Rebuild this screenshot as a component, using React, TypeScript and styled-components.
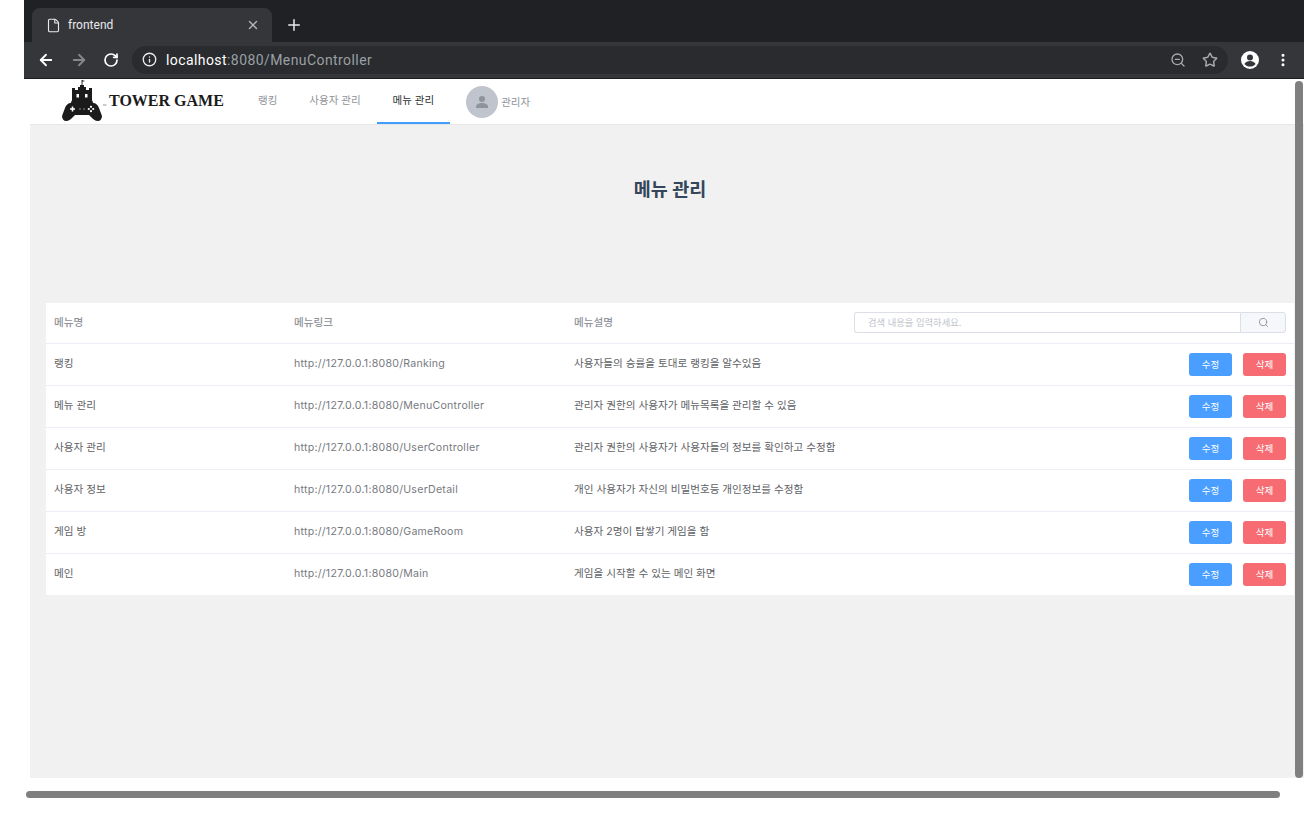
import React from 'react';
import styled, { createGlobalStyle } from 'styled-components';
import { ArrowLeft, ArrowRight, File, Info, MoreVertical, Plus, RotateCw, Search, Star, X, ZoomOut } from 'lucide-react';

const GlobalStyle = createGlobalStyle`
  html, body {
    margin: 0;
    padding: 0;
    background: #fff;
    overflow: hidden;
  }
  * { box-sizing: border-box; }
`;

const KR = `Inter, "Noto Sans CJK KR", sans-serif`;

const Page = styled.div`
  position: relative;
  width: 1304px;
  height: 828px;
  padding-left: 24px;
  overflow: hidden;
  font-family: ${KR};
`;

const TabStrip = styled.div`
  height: 42px;
  background: #202124;
  padding: 8px 0 0 8px;
  display: flex;
  align-items: flex-end;
`;

const Tab = styled.div`
  width: 240px;
  height: 34px;
  background: #35363a;
  border-radius: 8px 8px 0 0;
  padding: 0 12px 0 14px;
  display: flex;
  align-items: center;
  color: #e8eaed;
  font: 12px Roboto, sans-serif;
`;

const TabTitle = styled.span`
  flex: 1;
  margin-left: 7px;
`;

const NewTab = styled.div`
  height: 34px;
  margin-left: 13px;
  display: flex;
  align-items: center;
  color: #e8eaed;
`;

const Toolbar = styled.div`
  height: 37px;
  background: #35363a;
  border-bottom: 1px solid #1b1c1e;
  padding: 0 0 1px 13px;
  display: flex;
  align-items: center;
`;

const NavIcons = styled.div`
  width: 95px;
  display: flex;
  align-items: center;
  gap: 15px;
  color: #fff;
`;

const DimIcon = styled.span`
  display: flex;
  color: #85878a;
`;

const Omnibox = styled.div`
  width: 1096px;
  height: 28px;
  background: #292b2e;
  border-radius: 14px;
  padding: 0 10px;
  display: flex;
  align-items: center;
  color: #e8eaed;
  font: 14px Roboto, sans-serif;
  letter-spacing: 0.42px;
`;

const Address = styled.span`
  flex: 1;
  margin-left: 9px;
  color: #fff;
`;

const AddressRest = styled.span`
  color: #9aa0a6;
`;

const OmniIcons = styled.div`
  display: flex;
  align-items: center;
  gap: 16px;
  color: #a7a9ac;
`;

const ProfileIcons = styled.div`
  margin-left: 13px;
  display: flex;
  align-items: center;
  gap: 16px;
  color: #fff;
`;

const Header = styled.header`
  height: 45px;
  background: #fff;
  padding-left: 38px;
  display: flex;
`;

const Brand = styled.div`
  width: 180px;
  display: flex;
  align-items: flex-start;
`;

const BrandName = styled.span`
  margin: 13px 0 0 1px;
  font: bold 16px "Liberation Serif", serif;
  color: #1b1b1b;
  white-space: nowrap;
`;

const NavItem = styled.div<{ $active?: boolean }>`
  height: 45px;
  padding: 0 16px 2px;
  display: flex;
  align-items: center;
  font-size: 10.5px;
  white-space: nowrap;
  color: ${(p) => (p.$active ? '#303133' : '#909399')};
  border-bottom: 2px solid ${(p) => (p.$active ? '#409eff' : 'transparent')};
`;

const UserBox = styled.div`
  height: 45px;
  margin-left: 16px;
  display: flex;
  align-items: center;
  gap: 3px;
  font-size: 10.5px;
  color: #909399;
`;

const Avatar = styled.div`
  width: 32px;
  height: 32px;
  border-radius: 50%;
  background: #c0c4cc;
  display: flex;
  align-items: center;
  justify-content: center;
`;

const Content = styled.main`
  height: 654px;
  margin-left: 6px;
  background: #f1f1f1;
  border-top: 1px solid #e6e6e6;
  padding-left: 16px;
`;

const Title = styled.h2`
  margin: 0;
  width: 1248px;
  height: 178px;
  padding-top: 52px;
  text-align: center;
  font-size: 18.5px;
  line-height: 24px;
  font-weight: 700;
  color: #34465a;
`;

const Table = styled.section`
  width: 1248px;
  background: #fff;
`;

const Row = styled.div<{ $head?: boolean }>`
  height: ${(p) => (p.$head ? '41px' : '42px')};
  padding: 0 8px 4px;
  display: grid;
  grid-template-columns: 240px 280px 280px 1fr;
  align-items: center;
  font-size: 10.6px;
  font-weight: ${(p) => (p.$head ? 500 : 400)};
  color: ${(p) => (p.$head ? '#909399' : '#606266')};
  border-bottom: 1px solid #ebeef5;
  &:last-child {
    height: 41px;
    border-bottom: none;
  }
`;

const LinkCell = styled.span`
  margin-top: 2px;
  letter-spacing: 0.25px;
  color: #777a80;
`;

const SearchBox = styled.div`
  display: flex;
  height: 21px;
  margin-top: 3px;
`;

const SearchInput = styled.input`
  flex: 1;
  min-width: 0;
  border: 1px solid #dcdfe6;
  border-right: none;
  border-radius: 3px 0 0 3px;
  padding: 0 13px;
  font: 9.3px ${KR};
  outline: none;
  &::placeholder { color: #c0c4cc; }
`;

const SearchButton = styled.div`
  width: 46px;
  background: #f5f7fa;
  border: 1px solid #dcdfe6;
  border-radius: 0 3px 3px 0;
  display: flex;
  align-items: center;
  justify-content: center;
  color: #909399;
`;

const Actions = styled.div`
  display: flex;
  justify-content: flex-end;
  gap: 11px;
  margin-top: 3px;
`;

const ActionButton = styled.button<{ $danger?: boolean }>`
  width: 43px;
  height: 23px;
  padding: 0;
  border: none;
  border-radius: 3px;
  font: 9.5px ${KR};
  color: #fff;
  background: ${(p) => (p.$danger ? '#f66c72' : '#4a9eff')};
`;

const VerticalBar = styled.div`
  position: absolute;
  left: 1295px;
  top: 81px;
  width: 8px;
  height: 697px;
  border-radius: 4px;
  background: #7f7f7f;
`;

const HorizontalBar = styled.div`
  position: absolute;
  left: 26px;
  top: 791px;
  width: 1254px;
  height: 7px;
  border-radius: 4px;
  background: #7f7f7f;
`;

const menus = [
  { name: '랭킹', link: 'http://127.0.0.1:8080/Ranking', desc: '사용자들의 승률을 토대로 랭킹을 알수있음' },
  { name: '메뉴 관리', link: 'http://127.0.0.1:8080/MenuController', desc: '관리자 권한의 사용자가 메뉴목록을 관리할 수 있음' },
  { name: '사용자 관리', link: 'http://127.0.0.1:8080/UserController', desc: '관리자 권한의 사용자가 사용자들의 정보를 확인하고 수정함' },
  { name: '사용자 정보', link: 'http://127.0.0.1:8080/UserDetail', desc: '개인 사용자가 자신의 비밀번호등 개인정보를 수정함' },
  { name: '게임 방', link: 'http://127.0.0.1:8080/GameRoom', desc: '사용자 2명이 탑쌓기 게임을 함' },
  { name: '메인', link: 'http://127.0.0.1:8080/Main', desc: '게임을 시작할 수 있는 메인 화면' },
];

// castle on top of a game pad, plus the small dash that sits next to it
const Logo = () => (
  <svg width="46" height="44" viewBox="0 0 46 44" style={{ flex: 'none', marginTop: 1 }}>
    <path d="M20 0v6" stroke="#333" strokeWidth="1" />
    <path d="M20 0l3 1-3 1z" fill="#333" />
    <path
      d="M10 8h3v2h3V7h2V5h4v2h2v3h3V8h3v12l2 5H8l2-5z"
      fill="#1b1b1b"
    />
    <path
      d="M9 23h22c3 0 5 2 6 5l3 8c0 3-2 5-4 5-3 0-5-2-7-4l-2-2H13l-2 2c-2 2-4 4-7 4-2 0-4-2-4-5l3-8c1-3 3-5 6-5z"
      fill="#1b1b1b"
    />
    <rect x="14.500" y="14" width="2.500" height="3.500" fill="#fff" />
    <rect x="23" y="14" width="2.500" height="3.500" fill="#fff" />
    <path d="M10.500 26.500v5M8 29h5" stroke="#fff" strokeWidth="1.600" />
    <circle cx="29" cy="26.800" r="1.100" fill="#fff" />
    <circle cx="29" cy="31.200" r="1.100" fill="#fff" />
    <circle cx="26.800" cy="29" r="1.100" fill="#fff" />
    <circle cx="31.200" cy="29" r="1.100" fill="#fff" />
    <path d="M17 29h2M21 29h2" stroke="#888" strokeWidth="1" />
    <path d="M41 25h3.500" stroke="#999" strokeWidth="1" />
  </svg>
);

const AccountIcon = () => (
  <svg width="18" height="18" viewBox="0 0 18 18">
    <circle cx="9" cy="9" r="9" fill="#fff" />
    <circle cx="9" cy="6.600" r="3" fill="#35363a" />
    <path d="M3.400 13c1-2 3.400-3 5.600-3s4.600 1 5.600 3c-1.300 1.600-3.400 2.600-5.600 2.600S4.700 14.600 3.400 13z" fill="#35363a" />
  </svg>
);

const PersonIcon = () => (
  <svg width="14" height="14" viewBox="0 0 14 14">
    <circle cx="7" cy="4" r="3" fill="#8f939b" />
    <path d="M1 13v-1.500C1 9.500 4 8 7 8s6 1.500 6 3.500V13z" fill="#8f939b" />
  </svg>
);

const App: React.FC = () => {
  return (
    <Page>
      <GlobalStyle />
      <TabStrip>
        <Tab>
          <File size={15} strokeWidth={1.8} />
          <TabTitle>frontend</TabTitle>
          <X size={14} strokeWidth={2.4} color="#b5b7ba" />
        </Tab>
        <NewTab>
          <Plus size={18} />
        </NewTab>
      </TabStrip>
      <Toolbar>
        <NavIcons>
          <ArrowLeft size={18} strokeWidth={2.4} />
          <DimIcon>
            <ArrowRight size={18} strokeWidth={2.4} />
          </DimIcon>
          <RotateCw size={16} strokeWidth={2.6} />
        </NavIcons>
        <Omnibox>
          <Info size={15} strokeWidth={2.2} />
          <Address>
            localhost<AddressRest>:8080/MenuController</AddressRest>
          </Address>
          <OmniIcons>
            <ZoomOut size={16} />
            <Star size={16} strokeWidth={2.2} />
          </OmniIcons>
        </Omnibox>
        <ProfileIcons>
          <AccountIcon />
          <MoreVertical size={16} strokeWidth={2.6} />
        </ProfileIcons>
      </Toolbar>
      <Header>
        <Brand>
          <Logo />
          <BrandName>TOWER GAME</BrandName>
        </Brand>
        <NavItem>랭킹</NavItem>
        <NavItem>사용자 관리</NavItem>
        <NavItem $active>메뉴 관리</NavItem>
        <UserBox>
          <Avatar>
            <PersonIcon />
          </Avatar>
          관리자
        </UserBox>
      </Header>
      <Content>
        <Title>메뉴 관리</Title>
        <Table>
          <Row $head>
            <span>메뉴명</span>
            <span>메뉴링크</span>
            <span>메뉴설명</span>
            <SearchBox>
              <SearchInput placeholder="검색 내용을 입력하세요." />
              <SearchButton>
                <Search size={11} />
              </SearchButton>
            </SearchBox>
          </Row>
          {menus.map((m) => (
            <Row key={m.name}>
              <span>{m.name}</span>
              <LinkCell>{m.link}</LinkCell>
              <span>{m.desc}</span>
              <Actions>
                <ActionButton>수정</ActionButton>
                <ActionButton $danger>삭제</ActionButton>
              </Actions>
            </Row>
          ))}
        </Table>
      </Content>
      <VerticalBar />
      <HorizontalBar />
    </Page>
  );
};

export default App;
